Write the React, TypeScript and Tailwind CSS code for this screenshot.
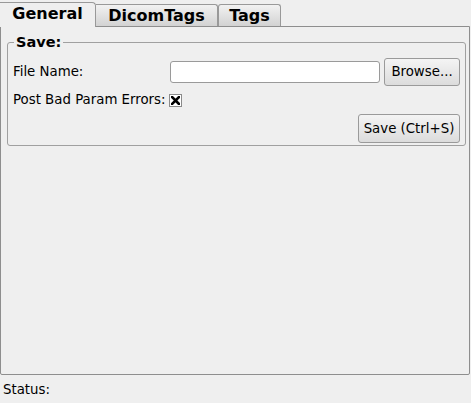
import React from "react";

const tabBase =
  "flex items-center justify-center font-bold text-[16px] text-black border-t border-r border-[#999999]";

function CheckMark() {
  return (
    <svg width="9" height="9" viewBox="0 0 9 9">
      <path d="M1 1 L8 8 M8 1 L1 8" stroke="#000" strokeWidth="2.6" strokeLinecap="square" />
    </svg>
  );
}

export default function App() {
  return (
    <div className="w-[471px] h-[403px] bg-[#efefef] flex flex-col font-['DejaVu_Sans',sans-serif] text-[13.33px] text-black overflow-hidden">
      <div className="relative z-10 flex items-end h-[26px] pt-[1px]">
        <div className={`${tabBase} w-[96px] h-[25px] -mb-px bg-[#efefef] rounded-tr-[4px] pb-[2px]`}>
          General
        </div>
        <div className={`${tabBase} w-[122px] h-[22px] bg-gradient-to-b from-[#f2f2f2] to-[#d2d2d2] rounded-tr-[3px] border-l-0`}>
          DicomTags
        </div>
        <div className={`${tabBase} w-[63px] h-[22px] bg-gradient-to-b from-[#f2f2f2] to-[#d2d2d2] rounded-t-[3px] border-l`}>
          Tags
        </div>
      </div>

      <div className="flex-1 border border-[#8e8e8e] mr-px rounded-b-[2px] px-[6px] pt-[7px]">
        <fieldset className="border border-[#a0a0a0] rounded-[3px] px-[5px] pb-[2px]">
          <legend className="ml-[1px] px-[2px] font-bold text-[14.5px] leading-[16px]">Save:</legend>
          <div className="flex items-center mt-[8px]">
            <span className="w-[157px]">File Name:</span>
            <input
              className="w-[210px] h-[22px] bg-white border border-[#9a9a9a] rounded-[3px] outline-none"
              type="text"
            />
            <button className="ml-[4px] w-[76px] h-[28px] border border-[#9a9a9a] rounded-[3px] bg-gradient-to-b from-[#f4f4f4] to-[#dcdcdc]">
              Browse...
            </button>
          </div>
          <div className="flex items-center mt-[3px] h-[22px]">
            <span className="w-[156px]">Post Bad Param Errors:</span>
            <span className="w-[13px] h-[13px] bg-white border border-[#8a8a8a] flex items-center justify-center">
              <CheckMark />
            </span>
          </div>
          <div className="flex justify-end mt-[3px]">
            <button className="w-[102px] h-[29px] border border-[#9a9a9a] rounded-[3px] bg-gradient-to-b from-[#f4f4f4] to-[#dcdcdc]">
              Save (Ctrl+S)
            </button>
          </div>
        </fieldset>
      </div>

      <div className="h-[28px] px-[3px] pt-[7px] leading-[16px]">Status:</div>
    </div>
  );
}
